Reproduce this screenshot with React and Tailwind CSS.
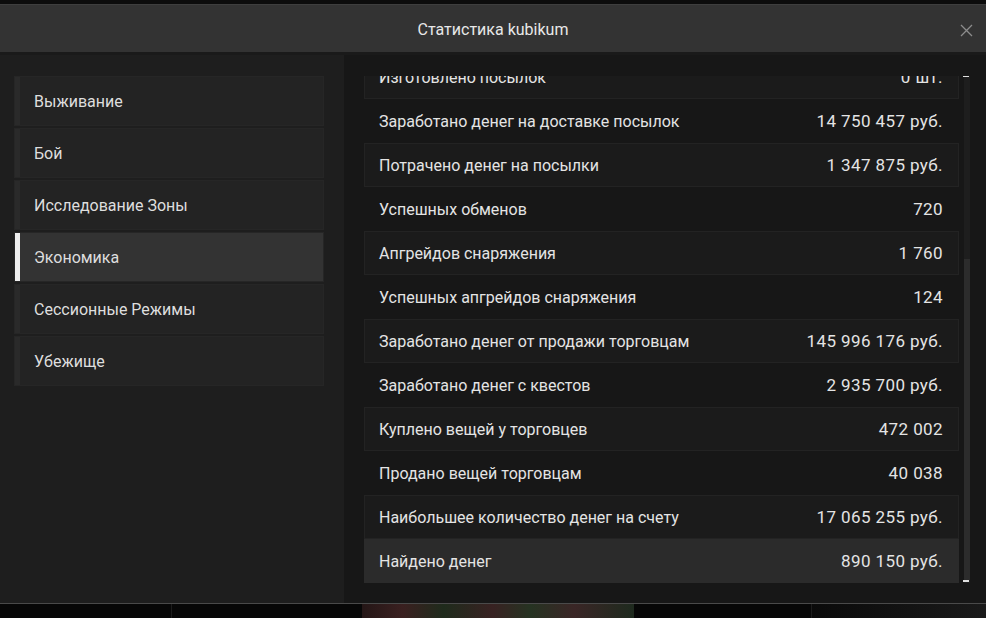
import React from "react";

const rows = [
  ["Изготовлено посылок", "0 шт."],
  ["Заработано денег на доставке посылок", "14 750 457 руб."],
  ["Потрачено денег на посылки", "1 347 875 руб."],
  ["Успешных обменов", "720"],
  ["Апгрейдов снаряжения", "1 760"],
  ["Успешных апгрейдов снаряжения", "124"],
  ["Заработано денег от продажи торговцам", "145 996 176 руб."],
  ["Заработано денег с квестов", "2 935 700 руб."],
  ["Куплено вещей у торговцев", "472 002"],
  ["Продано вещей торговцам", "40 038"],
  ["Наибольшее количество денег на счету", "17 065 255 руб."],
  ["Найдено денег", "890 150 руб."],
];

const nav = ["Выживание", "Бой", "Исследование Зоны", "Экономика", "Сессионные Режимы", "Убежище"];

export default function App() {
  return (
    <div
      className="w-[986px] h-[618px] bg-[#0a0a0a] flex flex-col overflow-hidden text-[#e4e4e4]"
      style={{ fontFamily: "Roboto, 'Liberation Sans', sans-serif" }}
    >
      <div className="h-[4px] bg-[#0c0c0c]" />
      <div className="h-[1px] bg-[#3e3e3e]" />
      <div className="h-[47px] bg-[#333333] relative flex items-center justify-center pt-[3px]">
        <span className="text-[16px] text-[#e8e8e8] leading-none">Статистика kubikum</span>
        <svg className="absolute right-[13px] top-[19px]" width="13" height="13" viewBox="0 0 13 13">
          <path d="M1 1L12 12M12 1L1 12" stroke="#8c8c8c" strokeWidth="1.3" />
        </svg>
      </div>
      <div className="h-[3px] bg-[#1a1a1a]" />
      <div className="h-[548px] flex">
        <div className="w-[344px] bg-[#1e1e1e] pl-[14px] pr-[20px] pt-[21px] flex flex-col gap-[2px]">
          {nav.map((n, i) => {
            const active = i === 3;
            return (
              <div
                key={n}
                className={
                  "h-[50px] flex items-center border border-[#262626] " +
                  (active ? "bg-[#333333]" : "bg-[#232323]")
                }
              >
                <div className={"w-[5px] self-stretch " + (active ? "bg-[#eeeeee]" : "bg-[#2a2a2a]")} />
                <span className="pl-[14px] pt-[2px] text-[16px] text-[#dedede]">{n}</span>
              </div>
            );
          })}
        </div>
        <div className="flex-1 bg-[#171717] pl-[20px] pr-[16px] pt-[21px] flex gap-[5px]">
          <div className="w-[595px] h-[507px] overflow-hidden">
            <div className="flex flex-col -mt-[21px]">
              {rows.map(([label, value], i) => {
                const last = i === rows.length - 1;
                const boxed = i % 2 === 0 && !last;
                return (
                  <div
                    key={label}
                    className={
                      "h-[44px] flex items-center justify-between pl-[14px] pr-[15px] pt-[2px] text-[16px] " +
                      (last
                        ? "bg-[#2b2b2b] border border-[#2b2b2b]"
                        : boxed
                        ? "bg-[#1b1b1b] border border-[#232323]"
                        : "border border-transparent")
                    }
                  >
                    <span>{label}</span>
                    <span className="text-[17px] tracking-[0.4px]">{value}</span>
                  </div>
                );
              })}
            </div>
          </div>
          <div className="w-[6px] h-[507px] bg-[#1e1e1e] relative">
            <div className="absolute left-0 right-0 top-[183px] bottom-[3px] bg-[#2c2c2c]" />
            <div className="absolute -left-[1px] w-[6px] top-0 h-[1px] bg-[#e0e0e0]" />
            <div className="absolute -left-[1px] w-[6px] bottom-[1px] h-[2px] bg-[#e0e0e0]" />
          </div>
        </div>
      </div>
      <div className="h-[1px] bg-[#4a4a4a]" />
      <div className="flex-1 flex bg-[#070707]">
        <div className="w-[172px] border-r border-[#1c1c1c]" />
        <div className="w-[190px]" />
        <div className="w-[272px] bg-[linear-gradient(90deg,#241616,#3a2020_15%,#1f2b1c_30%,#382222_48%,#263322_62%,#3a2626_78%,#1e2a1e)]" />
        <div className="w-[178px] border-r border-[#1c1c1c]" />
        <div className="flex-1 bg-[linear-gradient(90deg,#0a0a0a,#1a1a1a)]" />
      </div>
    </div>
  );
}
